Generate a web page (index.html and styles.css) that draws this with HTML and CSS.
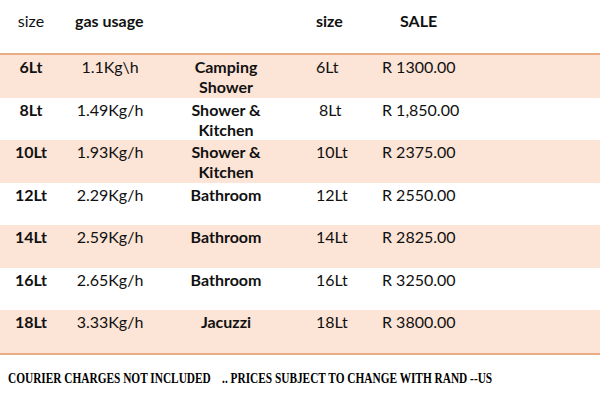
FILE: index.html
```html
<!DOCTYPE html>
<html>
<head>
<meta charset="utf-8">
<link rel="stylesheet" href="styles.css">
</head>
<body>
<div class="sheet">
  <div class="row head">
    <div class="c c1 plain">size</div>
    <div class="c c2">gas usage</div>
    <div class="c c3"></div>
    <div class="c c4">size</div>
    <div class="c c5 sale">SALE</div>
  </div>
  <div class="row peach">
    <div class="c c1">6Lt</div>
    <div class="c c2">1.1Kg\h</div>
    <div class="c c3">Camping<br>Shower</div>
    <div class="c c4">6Lt</div>
    <div class="c c5">R 1300.00</div>
  </div>
  <div class="row">
    <div class="c c1">8Lt</div>
    <div class="c c2">1.49Kg/h</div>
    <div class="c c3">Shower &amp;<br>Kitchen</div>
    <div class="c c4 nudge">8Lt</div>
    <div class="c c5">R 1,850.00</div>
  </div>
  <div class="row peach">
    <div class="c c1">10Lt</div>
    <div class="c c2">1.93Kg/h</div>
    <div class="c c3">Shower &amp;<br>Kitchen</div>
    <div class="c c4">10Lt</div>
    <div class="c c5">R 2375.00</div>
  </div>
  <div class="row">
    <div class="c c1">12Lt</div>
    <div class="c c2">2.29Kg/h</div>
    <div class="c c3">Bathroom</div>
    <div class="c c4">12Lt</div>
    <div class="c c5">R 2550.00</div>
  </div>
  <div class="row peach">
    <div class="c c1">14Lt</div>
    <div class="c c2">2.59Kg/h</div>
    <div class="c c3">Bathroom</div>
    <div class="c c4">14Lt</div>
    <div class="c c5">R 2825.00</div>
  </div>
  <div class="row">
    <div class="c c1">16Lt</div>
    <div class="c c2">2.65Kg/h</div>
    <div class="c c3">Bathroom</div>
    <div class="c c4">16Lt</div>
    <div class="c c5">R 3250.00</div>
  </div>
  <div class="row peach last">
    <div class="c c1">18Lt</div>
    <div class="c c2">3.33Kg/h</div>
    <div class="c c3">Jacuzzi</div>
    <div class="c c4">18Lt</div>
    <div class="c c5">R 3800.00</div>
  </div>
</div>
<p class="note">COURIER CHARGES NOT INCLUDED    .. PRICES SUBJECT TO CHANGE WITH RAND --US</p>
</body>
</html>
```

FILE: styles.css
```css
html, body {
  margin: 0;
  padding: 0;
  background: #ffffff;
}
body {
  width: 600px;
  height: 400px;
  overflow: hidden;
  font-family: Lato, "Open Sans", sans-serif;
  font-size: 16px;
  line-height: 20px;
  color: #111111;
}
.row {
  display: grid;
  grid-template-columns: 62px 96px 136px 70px 1fr;
  height: 42.57px;
  box-sizing: border-box;
  padding-top: 2px;
}
.row.head {
  height: 55px;
  padding-top: 11px;
  border-bottom: 2px solid #e8ad84;
}
.row.peach {
  background: #fce4d6;
}
.row.last {
  border-bottom: 2px solid #e8ad84;
  height: 44.57px;
}
.c {
  white-space: nowrap;
}
.c1 {
  text-align: center;
  font-weight: 700;
}
.c1.plain {
  font-weight: 400;
}
.c2 {
  text-align: center;
}
.head .c2 {
  text-align: left;
  padding-left: 13px;
  font-weight: 700;
}
.c3 {
  text-align: center;
  font-weight: 700;
}
.c4 {
  padding-left: 22px;
}
.c4.nudge {
  padding-left: 25px;
}
.head .c4 {
  font-weight: 700;
}
.c5 {
  padding-left: 18px;
}
.c5.sale {
  padding-left: 36px;
  font-weight: 700;
}
.note {
  margin: 15px 0 0 8px;
  font-family: "Liberation Serif", "Times New Roman", serif;
  font-weight: 700;
  font-size: 15px;
  line-height: 16px;
  white-space: pre;
  color: #000;
  transform: scaleX(0.755);
  transform-origin: left top;
}
```
